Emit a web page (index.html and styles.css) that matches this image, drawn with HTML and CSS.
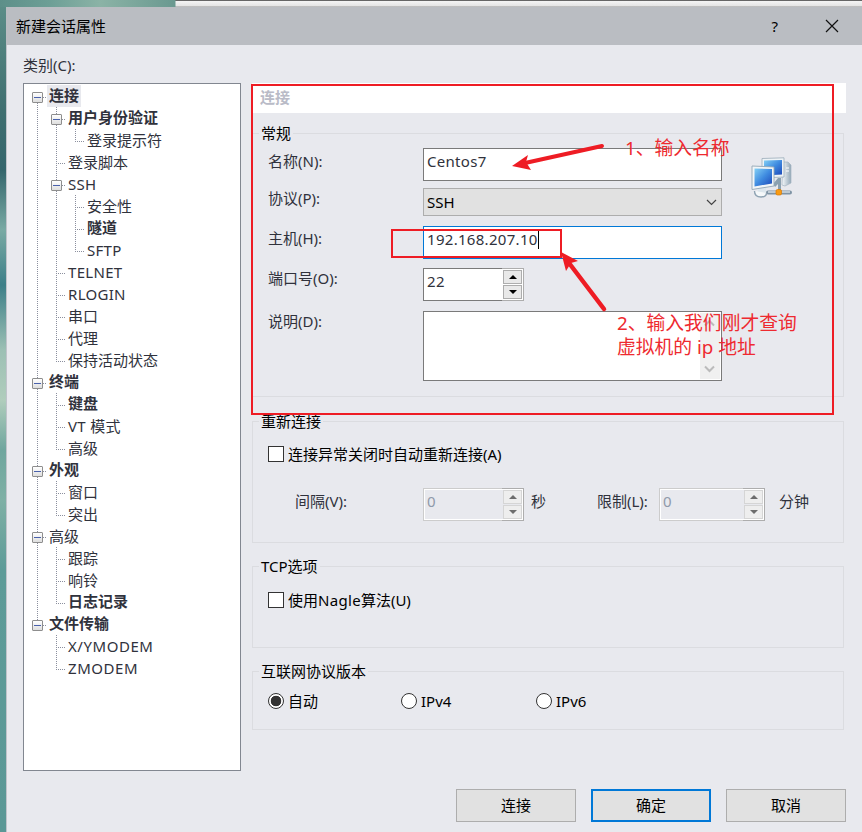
FILE: index.html
```html
<!DOCTYPE html>
<html lang="zh-CN">
<head>
<meta charset="utf-8">
<title>新建会话属性</title>
<link rel="stylesheet" href="styles.css">
</head>
<body>
<div class="behind"></div>
<main class="window">
  <header class="titlebar">
    <span class="title">新建会话属性</span>
    <span class="help">?</span>
    <svg class="close" width="14" height="14" viewBox="0 0 14 14"><path d="M1 1L13 13M13 1L1 13" stroke="#111" stroke-width="1.2" fill="none"/></svg>
  </header>
  <div class="content">
    <aside class="sidebar">
      <div class="caption">类别(C):</div>
      <div class="tree">
        <div class="row"><i class="g first"><b></b></i><span class="bold selected">连接</span></div>
        <div class="row"><i class="g v"></i><i class="g t"><b></b></i><span class="bold">用户身份验证</span></div>
        <div class="row"><i class="g v"></i><i class="g v"></i><i class="g l"></i><span>登录提示符</span></div>
        <div class="row"><i class="g v"></i><i class="g t"></i><span>登录脚本</span></div>
        <div class="row"><i class="g v"></i><i class="g t"><b></b></i><span class="latin">SSH</span></div>
        <div class="row"><i class="g v"></i><i class="g v"></i><i class="g t"></i><span>安全性</span></div>
        <div class="row"><i class="g v"></i><i class="g v"></i><i class="g t"></i><span class="bold">隧道</span></div>
        <div class="row"><i class="g v"></i><i class="g v"></i><i class="g l"></i><span class="latin">SFTP</span></div>
        <div class="row"><i class="g v"></i><i class="g t"></i><span class="latin">TELNET</span></div>
        <div class="row"><i class="g v"></i><i class="g t"></i><span class="latin">RLOGIN</span></div>
        <div class="row"><i class="g v"></i><i class="g t"></i><span>串口</span></div>
        <div class="row"><i class="g v"></i><i class="g t"></i><span>代理</span></div>
        <div class="row"><i class="g v"></i><i class="g l"></i><span>保持活动状态</span></div>
        <div class="row"><i class="g t"><b></b></i><span class="bold">终端</span></div>
        <div class="row"><i class="g v"></i><i class="g t"></i><span class="bold">键盘</span></div>
        <div class="row"><i class="g v"></i><i class="g t"></i><span class="latin">VT 模式</span></div>
        <div class="row"><i class="g v"></i><i class="g l"></i><span>高级</span></div>
        <div class="row"><i class="g t"><b></b></i><span class="bold">外观</span></div>
        <div class="row"><i class="g v"></i><i class="g t"></i><span>窗口</span></div>
        <div class="row"><i class="g v"></i><i class="g l"></i><span>突出</span></div>
        <div class="row"><i class="g t"><b></b></i><span>高级</span></div>
        <div class="row"><i class="g v"></i><i class="g t"></i><span>跟踪</span></div>
        <div class="row"><i class="g v"></i><i class="g t"></i><span>响铃</span></div>
        <div class="row"><i class="g v"></i><i class="g l"></i><span class="bold">日志记录</span></div>
        <div class="row"><i class="g l"><b></b></i><span class="bold">文件传输</span></div>
        <div class="row"><i class="g"></i><i class="g t"></i><span class="latin wider">X/YMODEM</span></div>
        <div class="row"><i class="g"></i><i class="g l"></i><span class="latin wider">ZMODEM</span></div>
      </div>
    </aside>
    <div class="panel">
      <h1 class="heading">连接</h1>
      <section class="group general">
        <h2>常规</h2>
        <div class="form">
          <div class="field name"><label>名称(N):</label><div class="input latin">Centos7</div></div>
          <div class="field protocol"><label>协议(P):</label><div class="combo">SSH<svg width="11" height="7" viewBox="0 0 11 7"><path d="M1 1L5.5 5.5L10 1" fill="none" stroke="#444" stroke-width="1.2"/></svg></div></div>
          <div class="field host"><label>主机(H):</label><div class="input focus latin">192.168.207.10<i class="caret"></i></div></div>
          <div class="field port"><label>端口号(O):</label><div class="spin latin"><span>22</span><div class="arrows"><i class="up"></i><i class="down"></i></div></div></div>
          <div class="field desc"><label>说明(D):</label><div class="area"><div class="scroll">
            <svg width="11" height="8" viewBox="0 0 11 8"><path d="M1 6.5L5.5 2L10 6.5" fill="none" stroke="#bbb" stroke-width="2"/></svg>
            <svg width="11" height="8" viewBox="0 0 11 8"><path d="M1 1.5L5.5 6L10 1.5" fill="none" stroke="#bbb" stroke-width="2"/></svg>
          </div></div></div>
        </div>
        <svg class="computers" width="42" height="42" viewBox="0 0 42 42">
          <defs>
            <linearGradient id="screen" x1="0" y1="0" x2="1" y2="1"><stop offset="0" stop-color="#83d0f5"/><stop offset=".5" stop-color="#3f8be0"/><stop offset="1" stop-color="#1c48b8"/></linearGradient>
            <linearGradient id="metal" x1="0" y1="0" x2="1" y2="0"><stop offset="0" stop-color="#f6f9fb"/><stop offset="1" stop-color="#93a8b8"/></linearGradient>
          </defs>
          <path d="M32 5L37 5L40 8V26L34 29L31 28Z" fill="url(#metal)" stroke="#a5b5c2" stroke-width=".7"/>
          <path d="M35 11H38M35 14H38" stroke="#fff"/>
          <path d="M22 27L27 21H30V33H27V27L24 30Z" fill="#8ba1b0"/>
          <path d="M11 1.500L33 .8V20L11 21Z" fill="#eef3f6" stroke="#9bacb9" stroke-width=".8"/>
          <path d="M13 3.500L31 3V17.500L13 18.500Z" fill="url(#screen)"/>
          <path d="M17 35.500H39" stroke="#7f94a5" stroke-width="4" stroke-linecap="round"/>
          <path d="M17 35H39" stroke="#d3dde5" stroke-width="1.500"/>
          <path d="M7 30H15V36H7Z" fill="#dce6ed"/>
          <path d="M3.500 34Q3.500 40 10 40Q15.500 40 15.500 36" fill="#f5f8fa" stroke="#8fa3b3" stroke-width="1.400"/>
          <path d="M1 9L23 10V29L1 32.500Z" fill="#f2f6f8" stroke="#93a7b6" stroke-width=".9"/>
          <path d="M3.500 11.500L21 12V26.500L3.500 29.500Z" fill="url(#screen)"/>
          <rect x="25" y="32.500" width="5.500" height="5.500" rx="1.500" fill="#f99b12" stroke="#d77905" stroke-width=".7"/>
        </svg>
      </section>
      <section class="group reconnect">
        <h2>重新连接</h2>
        <div class="check"><i class="box"></i>连接异常关闭时自动重新连接(A)</div>
        <div class="limits">
          <label class="interval">间隔(V):</label>
          <div class="spin off"><span>0</span><div class="arrows"><i class="up"></i><i class="down"></i></div></div>
          <span class="unit">秒</span>
          <label class="limit">限制(L):</label>
          <div class="spin off wide"><span>0</span><div class="arrows"><i class="up"></i><i class="down"></i></div></div>
          <span class="unit minutes">分钟</span>
        </div>
      </section>
      <section class="group tcp">
        <h2>TCP选项</h2>
        <div class="check"><i class="box"></i><span>使用<span class="latin">Nagle</span>算法(U)</span></div>
      </section>
      <section class="group version">
        <h2>互联网协议版本</h2>
        <div class="radios">
          <div class="check"><i class="box round on"></i>自动</div>
          <div class="check"><i class="box round"></i>IPv4</div>
          <div class="check"><i class="box round"></i>IPv6</div>
        </div>
      </section>
      <footer class="buttons">
        <div class="button">连接</div>
        <div class="button default">确定</div>
        <div class="button">取消</div>
      </footer>
    </div>
  </div>
</main>
<svg class="marks" width="862" height="832" viewBox="0 0 862 832">
  <g fill="none" stroke="#ee1c24" stroke-width="2">
    <rect x="252" y="85" width="581" height="329"/>
    <rect x="392" y="230" width="169" height="27"/>
  </g>
  <g stroke="#ee1c24" stroke-linecap="round" fill="#ee1c24">
    <path d="M602 146L525 163" stroke-width="4"/>
    <path d="M604 309L569 263" stroke-width="4.500"/>
    <path d="M512 166L528 155L526 162L531 170Z" stroke="none"/>
    <path d="M561 252L578 261L571 263L566 271Z" stroke="none"/>
  </g>
</svg>
<div class="note note-name">1、输入名称</div>
<div class="note note-host">2、输入我们刚才查询<br>虚拟机的 ip 地址</div>
</body>
</html>
```

FILE: styles.css
```css
* { box-sizing: border-box; }

body {
  margin: 0;
  width: 862px;
  height: 832px;
  overflow: hidden;
  position: relative;
  background: linear-gradient(180deg, #5d8f89 0, #3f6f70 110px, #34666c 170px, #79aaa4 230px, #3c7f88 285px, #9cc0b4 350px, #b0cdbc 400px, #6fa69e 450px, #7fb0a5 500px, #5d9b98 570px, #5b9896 832px);
  font: 15px/22px "Noto Sans", "Noto Sans CJK SC", sans-serif;
  color: #30323c;
  white-space: nowrap;
}

i { font-style: normal; }
.latin { letter-spacing: .3px; }
.wider { letter-spacing: .55px; }

.behind {
  height: 7px;
  background: linear-gradient(90deg, #5d8f89 0, #6d9f96 50px, #8bb3a6 100px, #6a9990 175px, transparent 176px),
    linear-gradient(180deg, #666 0, #666 1px, #f4f4f4 1px, #e4e4e4 6px, #999 7px);
}

.window {
  margin-left: 6px;
  height: 825px;
  background: #e8e9ee;
  border-left: 1px solid #bfc4ca;
}

.titlebar {
  display: flex;
  align-items: center;
  height: 38px;
  margin-left: -1px;
  padding: 0 23px 0 10px;
  background: #babdc2;
  color: #000;
}
.title { flex: 1; }
.help { margin-right: 47px; }
.close { display: block; }

.content { display: flex; }

.sidebar { width: 218px; margin-left: 16px; }
.caption { height: 38px; padding-top: 9px; }

.tree {
  height: 688px;
  padding: 1px 4px;
  background: #fff;
  border: 1px solid #828790;
}
.row { display: flex; height: 22px; }
.row span { padding: 0 2px; }
.row .bold { font-weight: 700; line-height: 20px; }
.row .selected { background: #e8e9ee; }

/* Guide cells: dotted vertical stem plus dotted branch */
.g {
  --stem: repeating-linear-gradient(180deg, #8b8f9e 0 1px, transparent 1px 2px);
  --branch: repeating-linear-gradient(90deg, #8b8f9e 0 1px, transparent 1px 2px);
  flex: none;
  width: 19px;
  height: 22px;
  padding: 7px 0 0 4px;
  background-repeat: no-repeat;
}
.g.v { background-image: var(--stem); background-position: 9px 0; background-size: 1px 22px; }
.g.t { background-image: var(--stem), var(--branch); background-position: 9px 0, 9px 12px; background-size: 1px 22px, 9px 1px; }
.g.l { background-image: var(--stem), var(--branch); background-position: 9px 0, 9px 12px; background-size: 1px 13px, 9px 1px; }
.g.first { background-image: var(--stem), var(--branch); background-position: 9px 12px, 9px 12px; background-size: 1px 10px, 9px 1px; }
.g b {
  display: block;
  width: 11px;
  height: 11px;
  border: 1px solid #8e8e8e;
  border-radius: 1px;
  background: linear-gradient(#4961ac, #4961ac) 1px 4px / 7px 1px no-repeat, linear-gradient(#fff, #dedede);
}

.panel { width: 594px; margin: 38px 0 0 11px; }

.heading {
  height: 30px;
  margin: 0;
  padding-left: 8px;
  background: #fff;
  color: #b9bbc7;
  font-size: 15px;
  line-height: 29px;
}

.group { width: 592px; border: 1px solid #dbdce0; }
.group h2 {
  width: max-content;
  margin: -12px 0 0 6px;
  padding: 0 2px;
  background: #e8e9ee;
  color: #000;
  font-size: 15px;
  font-weight: 400;
  line-height: 22px;
}

.general {
  display: grid;
  grid-template-columns: 498px 42px;
  grid-template-rows: 11px 1fr;
  height: 264px;
  margin-top: 20px;
}
.general h2 { grid-column: 1 / 3; }
.computers { display: block; margin-top: 12px; }
.form { padding: 3px 0 0 15px; }
.field { display: flex; }
.field label { width: 155px; margin-top: -1px; }
.name { height: 40px; }
.protocol { height: 38px; }
.host { height: 42px; }
.port { height: 43px; }
.name label { padding-top: 3px; }
.host label { padding-top: 2px; }

.input, .area {
  width: 299px;
  height: 33px;
  padding: 1px 3px;
  background: #fff;
  border: 1px solid #7a7a7a;
}
.input.focus { border-color: #0078d7; }
.caret {
  display: inline-block;
  width: 1px;
  height: 18px;
  background: #000;
  vertical-align: -4px;
}
.combo {
  display: flex;
  align-items: center;
  justify-content: space-between;
  width: 299px;
  height: 28px;
  padding: 0 4px 0 3px;
  background: #e1e1e1;
  border: 1px solid #adadad;
  color: #000;
}
.area { height: 70px; padding: 1px; }
.scroll {
  display: flex;
  flex-direction: column;
  align-items: center;
  justify-content: space-between;
  width: 20px;
  height: 66px;
  margin-left: auto;
  padding: 6px 1px 6px 0;
  background: #f0f0f0;
}

.spin {
  display: flex;
  width: 101px;
  height: 33px;
  border: 1px solid #7a7a7a;
  background: #fff;
}
.spin span { flex: 1; padding: 1px 3px; }
.arrows {
  display: flex;
  flex-direction: column;
  gap: 1px;
  width: 22px;
  margin: -1px -1px -1px 0;
  padding: 1px;
  border: 1px solid #adadad;
  border-left: 0;
}
.arrows i {
  display: flex;
  align-items: center;
  justify-content: center;
  flex: 1;
  width: 19px;
  border: 1px solid #adadad;
  background: #e9e9e9;
}
.arrows i::before { content: ""; border: 4px solid transparent; }
.arrows .up::before { border-top: 0; border-bottom-color: #000; }
.arrows .down::before { border-bottom: 0; border-top-color: #000; }
.spin.off { border-color: #ccc; background: #e8e9ee; box-shadow: inset 0 0 0 1px #fff; color: #909aaa; }
.spin.off .arrows i { border-color: #d5d5d5; background: #eee; }
.spin.off .up::before { border-bottom-color: #6d6d6d; }
.spin.off .down::before { border-top-color: #6d6d6d; }
.spin.wide { width: 106px; }

.check { display: flex; align-items: center; gap: 4px; height: 22px; color: #000; }
.box { flex: none; width: 16px; height: 16px; border: 1px solid #333; background: #fff; }
.round { border-radius: 50%; }
.round.on { background: radial-gradient(circle, #333 0 5px, #fff 5.6px); }

.reconnect { height: 122px; margin-top: 24px; }
.reconnect .check, .tcp .check { margin: 11px 0 0 15px; }
.limits { display: flex; margin-top: 23px; padding-left: 42px; }
.limits label, .unit { padding-top: 2px; }
.interval { width: 128px; }
.unit { width: 73px; padding-left: 7px; }
.limit { width: 62px; }
.unit.minutes { padding-left: 14px; }

.tcp { height: 82px; margin-top: 23px; }
.tcp .check { margin-top: 12px; }

.version { height: 59px; margin-top: 23px; }
.radios { display: grid; grid-template-columns: 133px 135px 1fr; padding: 8px 0 0 15px; }

.buttons { display: flex; justify-content: flex-end; gap: 15px; margin-top: 59px; }
.button {
  width: 120px;
  height: 33px;
  border: 1px solid #adadad;
  background: #e1e1e1;
  color: #000;
  line-height: 31px;
  text-align: center;
}
.button.default { border: 2px solid #0078d7; line-height: 29px; }

.marks { position: absolute; left: 0; top: 0; }
.note { position: absolute; color: #ee2a30; font-size: 18.8px; line-height: 24px; }
.note-name { left: 625px; top: 136px; }
.note-host { left: 617px; top: 311px; }
```
